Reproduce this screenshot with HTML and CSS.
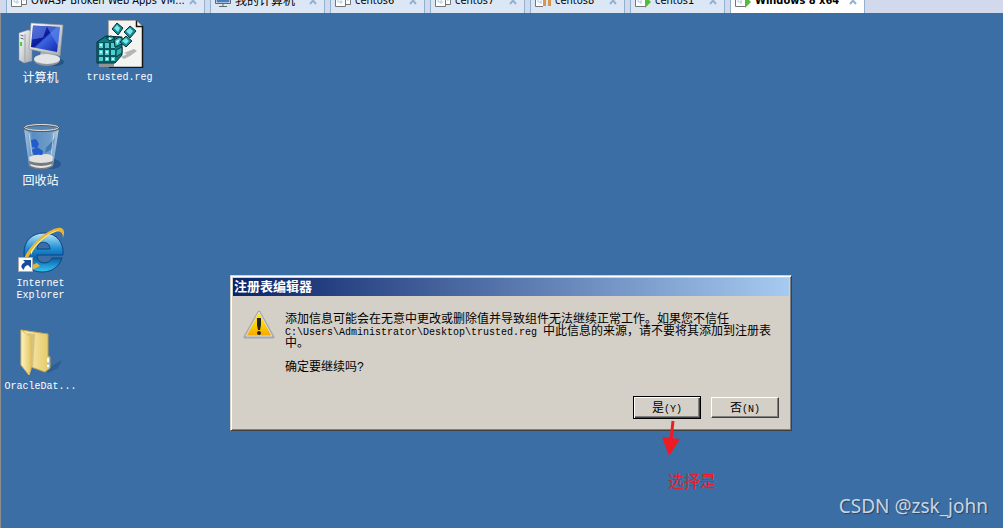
FILE: index.html
```html
<!DOCTYPE html>
<html lang="zh-CN">

<head>
    <meta charset="UTF-8">
    <meta name="viewport" content="width=device-width, initial-scale=1.0">
    <title>注册表编辑器</title>
    <link rel="stylesheet" href="styles.css">
</head>

<body>
    <!-- shared symbols -->
    <svg class="symbols" aria-hidden="true">
        <symbol id="vm" viewBox="0 0 16 16">
            <path d="M6.500 1.500h9v10h-9z" fill="#fff" stroke="#777"/>
            <path d="M13 2v6M10 6h5" fill="none" stroke="#b5cde6"/>
            <path d="M.5 1.500h10v12H.5z" fill="#fff" stroke="#777"/>
            <path d="M3 4v5h5M6 4v7" fill="none" stroke="#b5cde6"/>
        </symbol>
        <symbol id="vm-paused" viewBox="0 0 16 16">
            <path d="M8 13.500H.5V1.500h9" fill="#fff" stroke="#777"/>
            <path d="M3 4v5h4M6 4v7" fill="none" stroke="#b5cde6"/>
            <path d="M8 1h3v12H8zM13 1h3v12h-3z" fill="#d9964a"/>
        </symbol>
        <symbol id="vm-running" viewBox="0 0 16 16">
            <path d="M10 13.500H.5V1.500h10" fill="#fff" stroke="#777"/>
            <path d="M3 4v5h4M6 4v7" fill="none" stroke="#b5cde6"/>
            <path d="M10 3l6 6-6 6z" fill="#55bb3c"/>
        </symbol>
        <symbol id="close" viewBox="0 0 8 8">
            <path d="M1 0l6 7M7 0L1 7" stroke="#92b2d0" stroke-width="2"/>
        </symbol>
    </svg>

    <nav class="tabs">
        <div class="tab tab-wide"><svg class="tab-icon"><use href="#vm"/></svg><a href="#">OWASP Broken Web Apps VM...</a><button class="tab-close" aria-label="关闭"><svg><use href="#close"/></svg></button></div>
        <div class="tab tab-home"><svg class="tab-icon" viewBox="0 0 16 16"><path d="M1 1h14v9H1z" fill="#4a7fbe" stroke="#fff"/><path d="M.5.500h15v10H.5zM8 11v2M4 13.500h8" fill="none" stroke="#666"/></svg><a href="#">我的计算机</a><button class="tab-close" aria-label="关闭"><svg><use href="#close"/></svg></button></div>
        <div class="tab"><svg class="tab-icon"><use href="#vm"/></svg><a href="#">centos6</a><button class="tab-close" aria-label="关闭"><svg><use href="#close"/></svg></button></div>
        <div class="tab"><svg class="tab-icon"><use href="#vm"/></svg><a href="#">centos7</a><button class="tab-close" aria-label="关闭"><svg><use href="#close"/></svg></button></div>
        <div class="tab"><svg class="tab-icon"><use href="#vm-paused"/></svg><a href="#">centos8</a><button class="tab-close" aria-label="关闭"><svg><use href="#close"/></svg></button></div>
        <div class="tab"><svg class="tab-icon"><use href="#vm-running"/></svg><a href="#">centos1</a><button class="tab-close" aria-label="关闭"><svg><use href="#close"/></svg></button></div>
        <div class="tab tab-active"><svg class="tab-icon"><use href="#vm-running"/></svg><a href="#">Windows 8 x64</a><button class="tab-close" aria-label="关闭"><svg><use href="#close"/></svg></button></div>
    </nav>

    <main class="desktop">
        <div class="icons">
            <a class="icon" href="#">
                <svg viewBox="0 0 48 48">
                    <defs>
                        <linearGradient id="screen" x1="0" y1="0" x2="1" y2="1">
                            <stop offset="0" stop-color="#2444c8"/><stop offset=".45" stop-color="#0a1a9c"/><stop offset=".5" stop-color="#3c66e0"/><stop offset="1" stop-color="#0c22b0"/>
                        </linearGradient>
                        <linearGradient id="metal" x1="0" y1="0" x2="1" y2="1">
                            <stop offset="0" stop-color="#fff"/><stop offset="1" stop-color="#a4a9ac"/>
                        </linearGradient>
                    </defs>
                    <ellipse cx="38" cy="42" rx="9" ry="4" fill="#285486"/>
                    <path d="M2 13l9-3 4 1v30l-8 2-5-3z" fill="url(#metal)" stroke="#8b9194" stroke-width=".5"/>
                    <path d="M8 14v28" stroke="#9ba3a8"/>
                    <path d="M3.500 15l3 1M3.500 18l3 1" stroke="#596166"/>
                    <path d="M4 22v4" stroke="#47d32c" stroke-width="2"/>
                    <path d="M24 31l8 1 1 6-11 1z" fill="#aeb2b5"/>
                    <ellipse cx="30" cy="40" rx="13" ry="6" fill="#8d9498"/>
                    <ellipse cx="30" cy="39" rx="13" ry="5" fill="#e2e4e5"/>
                    <path d="M14 3l32 2-3 31-31-7z" fill="url(#metal)" stroke="#8e969b" stroke-width=".6"/>
                    <path d="M16 5.500L43 7l-3 25-26-5z" fill="url(#screen)"/>
                    <path d="M16 5.500l14 1-4 11-11 2z" fill="#7596ec" opacity=".55"/>
                    <path d="M30 7l13 0-2 19z" fill="#5f8cec" opacity=".6"/>
                </svg>
                <span>计算机</span>
            </a>
            <a class="icon" href="#">
                <svg viewBox="0 0 48 48">
                    <path d="M12.500.500h28l6 6v41h-34z" fill="#f4f4f2" stroke="#aaa"/>
                    <path d="M40.500.500v6h6v41h-34" fill="none" stroke="#151515" stroke-width="1.500"/>
                    <path d="M3 43h15v4H3z" fill="#8e9393"/>
                    <path d="M28 33l10-4 3 2-7 5-6 3-3-2 6-3z" fill="#b5b5b5"/>
                    <path d="M1 22l9-6 16 1v18l-7 8H1z" fill="#087f84" stroke="#032d30"/>
                    <path d="M2 22h17v20H2z" fill="#07595e"/>
                    <path d="M3 23h4v5H3zM9 23h4v5H9zM15 23h4v5h-4zM3 30h4v5H3zM9 30h4v5H9zM15 30h4v5h-4zM3 37h4v4H3zM9 37h4v4H9zM15 37h4v4h-4z" fill="#51ced2"/>
                    <path d="M4 24h2v2H4zM10 31h2v2h-2zM4 31h2v2H4zM10 38h2v2h-2zM16 38h2v2h-2z" fill="#c7ffff"/>
                    <path d="M10 18l5-2 4 2-5 3zM18 20l5-3 3 1v6l-7 3zM20 30l6-3v6l-6 4z" fill="#35acb0" stroke="#043438"/>
                    <path d="M13 17l3 2-3 1zM20 21l4-2-3 6z" fill="#afffff"/>
                    <g fill="#178c94" stroke="#05383d">
                        <path d="M16 9l5-6 6 5-5 7z"/><path d="M28 12l6-6 6 5-6 7z"/><path d="M24 22l6-6 6 5-6 6z"/>
                    </g>
                    <path d="M18 8l3-3 3 3-2 4zM30 11l4-3 3 3-3 4zM26 21l4-3 3 3-3 3z" fill="#79e7e9"/>
                </svg>
                <span class="latin">trusted.reg</span>
            </a>
            <a class="icon" href="#">
                <svg viewBox="0 0 48 48">
                    <defs>
                        <linearGradient id="glass">
                            <stop offset="0" stop-color="#c0d6e8"/><stop offset=".25" stop-color="#5f93c5"/><stop offset=".75" stop-color="#79a5ce"/><stop offset="1" stop-color="#cddeea"/>
                        </linearGradient>
                    </defs>
                    <ellipse cx="35" cy="41" rx="9" ry="5" fill="#27588e"/>
                    <path d="M7 5l5 38q12 6 24 0l6-38z" fill="url(#glass)" opacity=".85"/>
                    <path d="M14 17l5-1 3 5-2 4-5-1zM15 27l5-3 6 4-1 6-7 1z" fill="#235bcc"/>
                    <path d="M29 25l9-10-3 11-7 4z" fill="#3e79b1"/>
                    <path d="M12 34q6-3 12-2 8-3 12 2l-1 6q-11 4-22 0z" fill="#e1e2e0"/>
                    <path d="M12 38q12 4 24 0l-1 6q-11 5-22 0z" fill="#777b7d"/>
                    <path d="M13 41q11 4 22 0l-1 2q-10 4-20 0z" fill="#e8e8e8"/>
                    <ellipse cx="24.500" cy="5" rx="17" ry="3" fill="#5687b2" stroke="#52585c" stroke-width="2"/>
                    <ellipse cx="24.500" cy="4.500" rx="17" ry="3" fill="none" stroke="#e7eaec"/>
                    <path d="M12 10l3 22M37 10l-3 23" stroke="#e4f0f7" opacity=".65"/>
                </svg>
                <span>回收站</span>
            </a>
            <a class="icon" href="#">
                <svg viewBox="0 0 48 48">
                    <defs>
                        <linearGradient id="ie" x2="0" y2="1">
                            <stop offset="0" stop-color="#b9e8f8"/><stop offset=".4" stop-color="#1f8dd3"/><stop offset=".65" stop-color="#0861a9"/><stop offset="1" stop-color="#38c6f2"/>
                        </linearGradient>
                    </defs>
                    <path fill-rule="evenodd" d="M46 29H20c0 10 12 10 15 3h10c-3 9-10 14-20 14C13 46 7 38 7 27 7 15 15 7 27 7c13 0 20 10 19 22zM20 23h13c0-9-13-9-13 0z" fill="url(#ie)" stroke="#0b4586"/>
                    <path d="M12 41C-2 49 7 24 24 11 35 2 48-3 47 8l-1 4C46 3 38 4 28 12 14 23 7 37 9 40q1 2 11-3l3 3q-8 5-15 4z" fill="#eab331"/>
                    <path d="M14 25C22 13 36 4 43 4q-8 2-18 10-8 7-11 15z" fill="#fff0a0"/>
                    <path d="M1.500 31.500h14v14h-14z" fill="#fff" stroke="#ababab"/>
                    <path d="M6 34h8v8l-3-3q-4 1-4 5-6-4 1-8z" fill="#164b9d"/>
                </svg>
                <span class="latin">Internet<br>Explorer</span>
            </a>
            <a class="icon" href="#">
                <svg viewBox="0 0 48 48">
                    <defs>
                        <linearGradient id="folder">
                            <stop offset="0" stop-color="#fff3bd"/><stop offset="1" stop-color="#e4c766"/>
                        </linearGradient>
                    </defs>
                    <path d="M28 41l17-10-4 8-10 5z" fill="#285485" opacity=".6"/>
                    <path d="M4 1l27 4v22l2 1v11l-5 4-14-5z" fill="url(#folder)" stroke="#c1a44e"/>
                    <path d="M11 4l7 1-2 33-4-1z" fill="#b9a25f" opacity=".5"/>
                    <path d="M4 1l10 7v32l-2 6-8-10z" fill="url(#folder)" stroke="#d8bd67"/>
                    <path d="M31 29v9" stroke="#fff" stroke-width="2"/>
                    <path d="M31 33v3" stroke="#43a0c8"/>
                </svg>
                <span class="latin">OracleDat...</span>
            </a>
        </div>

        <section class="dialog" role="dialog" aria-labelledby="dialog-title">
            <h1 class="dialog-title" id="dialog-title">注册表编辑器</h1>
            <div class="dialog-body">
                <svg class="warning" viewBox="0 0 32 30">
                    <defs>
                        <linearGradient id="yellow" x2="0" y2="1">
                            <stop offset="0" stop-color="#fff000"/><stop offset=".55" stop-color="#fbd100"/><stop offset="1" stop-color="#f7a600"/>
                        </linearGradient>
                    </defs>
                    <path d="M16 2L30 27H2z" fill="#bdbdbb" stroke="#a8a8a8" stroke-width="3" stroke-linejoin="round"/>
                    <path d="M16 2L29 26H3z" fill="url(#yellow)" stroke="#ddd" stroke-linejoin="round"/>
                    <path d="M14 8h4v7l-1 5h-2l-1-5z" fill="#222"/>
                    <circle cx="16" cy="23" r="2" fill="#222"/>
                </svg>
                <div class="message">
                    <p>添加信息可能会在无意中更改或删除值并导致组件无法继续正常工作。如果您不信任 <span class="latin">C:\Users\Administrator\Desktop\trusted.reg </span>中此信息的来源，请不要将其添加到注册表中。</p>
                    <p>确定要继续吗?</p>
                </div>
            </div>
            <div class="buttons">
                <button class="btn btn-default">是<span class="latin">(Y)</span></button>
                <button class="btn">否<span class="latin">(N)</span></button>
            </div>
        </section>

        <div class="note">
            <svg viewBox="0 0 20 36"><path d="M11 1L9 20" stroke="#ed1c24" stroke-width="3"/><path d="M0 17l18 2L7 36z" fill="#ed1c24"/></svg>
            <span>选择是</span>
        </div>
        <div class="watermark">CSDN @zsk_john</div>
    </main>
</body>

</html>
```
FILE: styles.css
```css
* {
    box-sizing: border-box;
}

body {
    margin: 0;
    min-height: 100vh;
    display: flex;
    flex-direction: column;
    background-color: #3b6ea5;
    font-family: "Liberation Sans", "Noto Sans CJK SC", sans-serif;
    font-size: 12px;
}

a {
    color: inherit;
    text-decoration: none;
}

button {
    font: inherit;
    padding: 0;
}

.symbols {
    position: absolute;
    width: 0;
    height: 0;
}

/* only the lower half of the tab strip is in view */
.tabs {
    display: flex;
    align-items: flex-end;
    gap: 5px;
    height: 13px;
    padding-left: 6px;
    overflow: hidden;
    background-color: #d3d9ec;
}

.tab {
    display: flex;
    align-items: center;
    gap: 4px;
    flex: none;
    width: 95px;
    height: 26px;
    padding: 0 7px 0 4px;
    border: 1px solid #8fb0cf;
    border-bottom: none;
    background-color: #dce7f5;
    font-family: "DejaVu Sans Condensed", "DejaVu Sans", "Noto Sans CJK SC", sans-serif;
    font-size: 11px;
    line-height: 16px;
    white-space: nowrap;
}

.tab-wide {
    width: 199px;
}

.tab-home {
    width: 115px;
    font-size: 12px;
}

.tab-active {
    width: 135px;
    background-color: #fff;
    font-weight: bold;
}

.tab-icon {
    flex: none;
    width: 16px;
    height: 16px;
}

.tab-close {
    display: flex;
    margin-left: auto;
    border: none;
    background: none;
}

.tab-close svg {
    width: 8px;
    height: 8px;
}

.desktop {
    position: relative;
    flex: 1;
    border-left: 1px solid #8d8d8d;
}

.icons {
    display: grid;
    grid-template-columns: 79px 79px;
    grid-auto-rows: 103px;
    padding-top: 7px;
}

.icon {
    display: flex;
    flex-direction: column;
    align-items: center;
    gap: 4px;
    color: #fff;
    line-height: 12px;
    text-align: center;
}

.icon:nth-child(n+3) {
    grid-column: 1;
}

.icon svg {
    width: 48px;
    height: 48px;
}

.latin {
    font-family: "Liberation Mono", monospace;
    font-size: 10px;
    white-space: nowrap;
}

.dialog {
    position: absolute;
    top: 262px;
    left: 229px;
    width: 562px;
    padding: 2px;
    border: 1px solid;
    border-color: #d4d0c8 #404040 #404040 #d4d0c8;
    box-shadow: inset 1px 1px #fff, inset -1px -1px #808080;
    background-color: #d4d0c8;
}

.dialog-title {
    margin: 0;
    padding-left: 1px;
    background: linear-gradient(to right, #0a246a, #a6caf0);
    color: #fff;
    font-size: 13px;
    line-height: 18px;
}

.dialog-body {
    display: flex;
    align-items: flex-start;
    gap: 10px;
    padding: 14px 16px 0 10px;
}

.warning {
    flex: none;
    width: 32px;
    height: 30px;
}

.message {
    line-height: 12px;
    padding-top: 3px;
}

.message .latin,
.btn .latin {
    line-height: 8px;
}

.message p {
    margin: 0 0 12px;
}

.buttons {
    display: flex;
    justify-content: flex-end;
    align-items: center;
    gap: 10px;
    padding: 11px 10px 9px;
}

.btn {
    width: 68px;
    height: 21px;
    border: 1px solid;
    border-color: #fff #404040 #404040 #fff;
    box-shadow: inset -1px -1px #808080;
    background-color: #d4d0c8;
    color: #000;
    line-height: 16px;
}

.btn-default {
    height: 23px;
    border-color: #000;
    box-shadow: inset 1px 1px #fff, inset -1px -1px #404040, inset -2px -2px #808080;
}

.note {
    position: absolute;
    top: 407px;
    left: 661px;
    color: #ed1c24;
    font-size: 16px;
    line-height: 24px;
}

.note svg {
    display: block;
    width: 20px;
    height: 36px;
    margin-bottom: 14px;
}

.note span {
    margin-left: 6px;
}

.watermark {
    position: absolute;
    right: 15px;
    bottom: 8px;
    color: #cbd5df;
    font-family: "Noto Sans", sans-serif;
    font-size: 19px;
    line-height: 28px;
    text-shadow: 1px 1px 1px #24456b;
}
```
